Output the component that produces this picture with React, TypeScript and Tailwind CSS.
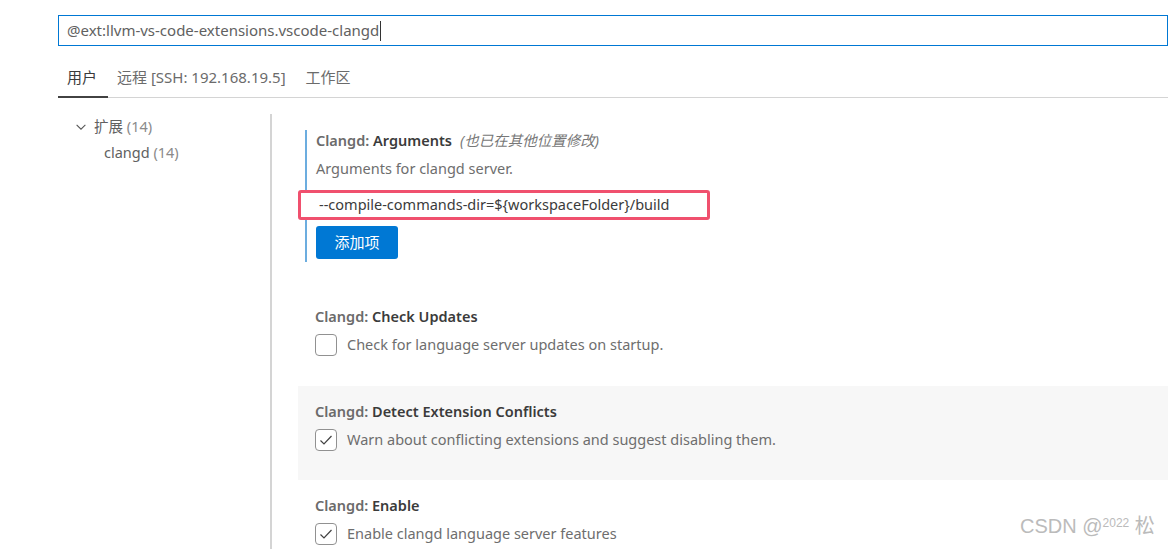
import React from "react";

const font = { fontFamily: '"Noto Sans", "Noto Sans CJK SC", sans-serif' };

function Check({ checked }: { checked: boolean }) {
  return (
    <div className="w-[22px] h-[22px] shrink-0 rounded-[4px] border border-[#919191] bg-white flex items-center justify-center">
      {checked && (
        <svg width="16" height="16" viewBox="0 0 16 16" fill="none">
          <path d="M2.5 8.5 L6 12 L13.5 4" stroke="#424242" strokeWidth="1.2" />
        </svg>
      )}
    </div>
  );
}

function BoolSetting({ name, desc, checked, highlight }: { name: string; desc: string; checked: boolean; highlight?: boolean }) {
  return (
    <div className={`pl-[17px] ${highlight ? "bg-[#f7f7f7] pt-[15px] pb-[29px]" : "pt-[15px] pb-[21px]"}`}>
      <div className="text-[14.5px] leading-[20px] font-semibold text-[#6b6b6b]">
        Clangd: <span className="text-[#3b3b3b]">{name}</span>
      </div>
      <div className="flex items-center gap-[10px] mt-[8px]">
        <Check checked={checked} />
        <span className="text-[14.5px] text-[#6e6e6e]">{desc}</span>
      </div>
    </div>
  );
}

export default function App() {
  return (
    <div className="w-[1168px] h-[549px] bg-white overflow-hidden relative" style={font}>
      <div className="pl-[58px] pt-[15px]">
        <div className="h-[31px] border border-[#0078d4] flex items-center pl-[8px] text-[15px] text-[#616161]">
          <span>@ext:llvm-vs-code-extensions.vscode-clangd</span>
          <span className="w-px h-[20px] bg-[#333] ml-[1px]" />
        </div>
        <div className="flex items-end h-[52px] border-b border-[#d4d4d4] text-[15px]">
          <div className="pl-[9px] pr-[11px] pb-[8px] border-b-2 border-[#424242] -mb-px text-[#3b3b3b]">用户</div>
          <div className="px-[9px] pb-[9px] text-[#6b6b6b]">远程 [SSH: 192.168.19.5]</div>
          <div className="px-[11px] pb-[9px] text-[#6b6b6b]">工作区</div>
        </div>
      </div>
      <div className="flex">
        <div className="w-[270px] pt-[19px] text-[14.5px] text-[#616161]">
          <div className="flex items-center pl-[74px] h-[20px]">
            <svg width="14" height="14" viewBox="0 0 16 16" fill="none">
              <path d="M3 5.5 L8 10.5 L13 5.5" stroke="#555" strokeWidth="1.2" />
            </svg>
            <span className="ml-[6px]">扩展 <span className="text-[#8a8a8a]">(14)</span></span>
          </div>
          <div className="pl-[104px] mt-[5px]">
            clangd <span className="text-[#8a8a8a]">(14)</span>
          </div>
        </div>
        <div className="flex-1 border-l-2 border-[#d4d4d4] mt-[16px] pl-[26px] h-[450px]">
          <div className="pt-[16px] pl-[7px]">
            <div className="border-l-2 border-[#6caddf] pl-[9px] pb-[10px]">
              <div className="text-[14.5px] leading-[20px] font-semibold text-[#6b6b6b]">
                Clangd: <span className="text-[#3b3b3b]">Arguments</span>
                <span className="ml-[8px] font-normal italic text-[#777]">(也已在其他位置修改)</span>
              </div>
              <div className="text-[14.5px] text-[#6e6e6e] mt-[8px]">Arguments for clangd server.</div>
            </div>
          </div>
          <div className="w-[412px] h-[30px] border-[3px] border-[#f0506e] rounded-[3px] flex items-center pl-[18px] text-[14.5px] text-[#3b3b3b]">
            --compile-commands-dir=${"{"}workspaceFolder{"}"}/build
          </div>
          <div className="pl-[7px]">
            <div className="border-l-2 border-[#6caddf] pl-[9px] pt-[6px] pb-[3px]">
              <button className="h-[33px] w-[82px] rounded-[3px] bg-[#0078d4] text-white text-[15px]">添加项</button>
            </div>
          </div>
          <div className="mt-[29px]">
            <BoolSetting name="Check Updates" desc="Check for language server updates on startup." checked={false} />
          </div>
          <div className="mt-[9px]">
            <BoolSetting name="Detect Extension Conflicts" desc="Warn about conflicting extensions and suggest disabling them." checked={true} highlight />
          </div>
          <BoolSetting name="Enable" desc="Enable clangd language server features" checked={true} />
        </div>
      </div>
      <div className="absolute left-[1020px] bottom-[8px] whitespace-nowrap text-[20px] text-[#bbbbbb]" style={{ fontFamily: '"Liberation Sans", "Noto Sans CJK SC", sans-serif' }}>
        CSDN @<sup className="text-[12px]">2022</sup> 松
      </div>
    </div>
  );
}
